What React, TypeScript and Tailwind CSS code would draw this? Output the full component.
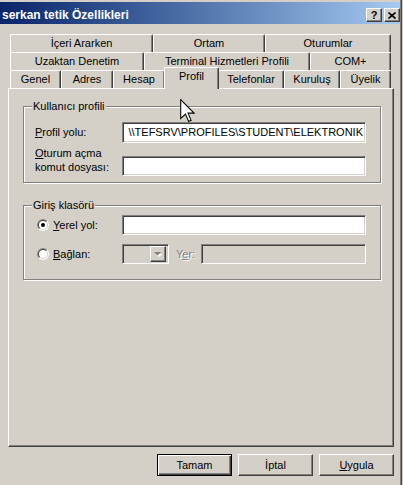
import clsx from 'clsx';

const row1 = [
  { label: 'İçeri Ararken', w: 'w-[143px]' },
  { label: 'Ortam', w: 'w-[112px]' },
  { label: 'Oturumlar', w: 'w-[126px]' },
];

const row2 = [
  { label: 'Uzaktan Denetim', w: 'w-[134px]' },
  { label: 'Terminal Hizmetleri Profili', w: 'w-[166px]' },
  { label: 'COM+', w: 'w-[81px]' },
];

const row3 = [
  { label: 'Genel', w: 'w-[51px]' },
  { label: 'Adres', w: 'w-[52px]' },
  { label: 'Hesap', w: 'w-[52px]' },
  { label: 'Profil', w: 'w-[55px]', active: true },
  { label: 'Telefonlar', w: 'w-[66px]' },
  { label: 'Kuruluş', w: 'w-[56px]' },
  { label: 'Üyelik', w: 'w-[51px]' },
];

const raised =
  'border-t border-l border-white border-r border-b border-r-[#404040] border-b-[#404040] shadow-[inset_-1px_-1px_0_#808080]';
const sunken =
  'border-t border-l border-[#808080] border-r border-b border-r-white border-b-white shadow-[inset_1px_1px_0_#404040,inset_-1px_-1px_0_#d4d0c8]';

type TabItem = { label: string; w: string; active?: boolean };

function TabRow({ tabs }: { tabs: TabItem[] }) {
  return (
    <div className="ml-[10px] flex h-[18px] items-start">
      {tabs.map((t) => (
        <div
          key={t.label}
          className={clsx(
            t.w,
            'flex justify-center rounded-t-[2px] border-l border-t border-r border-white border-r-[#404040] leading-none shadow-[inset_-1px_0_0_#808080]',
            t.active
              ? 'relative z-10 -mx-[1px] -mt-[3px] h-[22px] items-start bg-[#d4d0c8] pt-[3px]'
              : 'h-[18px] items-center',
          )}
        >
          {t.label}
        </div>
      ))}
    </div>
  );
}

function Radio({ checked }: { checked?: boolean }) {
  return (
    <svg width="12" height="12" viewBox="0 0 12 12" className="shrink-0">
      <circle cx="6" cy="6" r="6" fill="#ffffff" />
      <path d="M1.757 10.243 A6 6 0 0 1 10.243 1.757 Z" fill="#808080" />
      <circle cx="6" cy="6" r="5" fill="#d4d0c8" />
      <path d="M2.464 9.536 A5 5 0 0 1 9.536 2.464 Z" fill="#404040" />
      <circle cx="6" cy="6" r="4" fill="#ffffff" />
      {checked && <circle cx="6" cy="6" r="2" fill="#000000" />}
    </svg>
  );
}

function Button({ children, isDefault }: { children: React.ReactNode; isDefault?: boolean }) {
  return (
    <div
      className={clsx(
        'flex h-[22px] w-[75px] items-center justify-center',
        isDefault
          ? 'border border-black shadow-[inset_1px_1px_0_#fff,inset_-1px_-1px_0_#404040,inset_-2px_-2px_0_#808080]'
          : raised,
      )}
    >
      {children}
    </div>
  );
}

export default function App() {
  return (
    <div className="relative flex h-[485px] w-[403px] overflow-hidden bg-[#d4d0c8] font-['Liberation_Sans',Arial,sans-serif] text-[11px] text-black">
      <div className="h-full w-[402px] border-r border-r-[#404040] pt-[2px] shadow-[inset_-1px_0_0_#808080]">
        {/* title bar */}
        <div className="flex h-[22px] w-[400px] items-center bg-gradient-to-r from-[#0a246a] to-[#a6caf0] pb-[1px] pl-[2px] pt-[5px]">
          <span className="flex-1 text-[12px] font-bold leading-none text-white">serkan tetik Özellikleri</span>
          <div className="flex gap-[2px]">
            <div className={clsx(raised, 'flex h-[14px] w-[16px] items-center justify-center bg-[#d4d0c8] text-[11px] font-bold leading-none')}>
              ?
            </div>
            <div className={clsx(raised, 'flex h-[14px] w-[16px] items-center justify-center bg-[#d4d0c8]')}>
              <svg width="8" height="7" viewBox="0 0 8 7">
                <path d="M0.5 0.5 L7.5 6.5 M7.5 0.5 L0.5 6.5" stroke="#000" strokeWidth="1.6" />
              </svg>
            </div>
          </div>
        </div>

        {/* tabs */}
        <div className="pt-[10px]">
          <TabRow tabs={row1} />
          <TabRow tabs={row2} />
          <TabRow tabs={row3} />
        </div>

        {/* panel */}
        <div className={clsx(raised, 'ml-[8px] h-[359px] w-[386px] pl-[14px] pt-[17px]')}>
          {/* Kullanıcı profili */}
          <div className="relative h-[77px] w-[358px] border border-[#808080] shadow-[inset_1px_1px_0_#fff,1px_1px_0_#fff]">
            <span className="absolute -top-[8px] left-[8px] bg-[#d4d0c8] px-[1px] leading-[14px]">Kullanıcı profili</span>
            <div className="pl-[11px] pt-[15px]">
              <div className="flex h-[21px] items-center">
                <span className="w-[87px]">
                  <span className="underline">P</span>rofil yolu:
                </span>
                <div className={clsx(sunken, 'flex h-[21px] w-[244px] items-center justify-end overflow-hidden whitespace-nowrap bg-white pr-[2px]')}>
                  {'\\\\TEFSRV\\PROFILES\\STUDENT\\ELEKTRONIK'}
                </div>
              </div>
              <div className="mt-[3px] flex items-end">
                <span className="w-[87px] pb-[2px] leading-[14px]">
                  <span className="underline">O</span>turum açma
                  <br />
                  komut dosyası:
                </span>
                <div className={clsx(sunken, 'h-[20px] w-[244px] bg-white')} />
              </div>
            </div>
          </div>

          {/* Giriş klasörü */}
          <div className="relative mt-[22px] h-[75px] w-[358px] border border-[#808080] shadow-[inset_1px_1px_0_#fff,1px_1px_0_#fff]">
            <span className="absolute -top-[8px] left-[8px] bg-[#d4d0c8] px-[1px] leading-[14px]">Giriş klasörü</span>
            <div className="pl-[13px] pt-[9px]">
              <div className="flex h-[20px] items-center">
                <div className="flex w-[85px] items-center gap-[4px]">
                  <Radio checked />
                  <span>
                    <span className="underline">Y</span>erel yol:
                  </span>
                </div>
                <div className={clsx(sunken, 'h-[20px] w-[244px] bg-white')} />
              </div>
              <div className="mt-[9px] flex h-[20px] items-center">
                <div className="flex w-[85px] items-center gap-[4px]">
                  <Radio />
                  <span>
                    <span className="underline">B</span>ağlan:
                  </span>
                </div>
                <div className={clsx(sunken, 'flex h-[20px] w-[47px] items-center justify-end p-[2px]')}>
                  <div className={clsx(raised, 'flex h-[16px] w-[16px] items-center justify-center')}>
                    <svg width="8" height="5" viewBox="0 0 8 5">
                      <path d="M1 1 H7 L4 4 Z" fill="#fff" transform="translate(1 1)" />
                      <path d="M0 0 H7 L3.5 3.5 Z" fill="#808080" />
                    </svg>
                  </div>
                </div>
                <span className="ml-[7px] w-[25px] text-[#808080] [text-shadow:1px_1px_0_#fff]">
                  Y<span className="underline">e</span>r:
                </span>
                <div className={clsx(sunken, 'h-[20px] w-[165px]')} />
              </div>
            </div>
          </div>
        </div>

        {/* buttons */}
        <div className="mt-[7px] flex w-[394px] justify-end gap-[6px]">
          <Button isDefault>Tamam</Button>
          <Button>İptal</Button>
          <Button>
            <span>
              <span className="underline">U</span>ygula
            </span>
          </Button>
        </div>
      </div>

      {/* mouse cursor */}
      <svg className="absolute left-[180px] top-[99px]" width="15" height="23" viewBox="0 0 12.5 19.5">
        <path
          d="M0.5 0.5 V16.5 L4.5 12.8 L7.2 19 L9.3 18.1 L6.7 12 H11.8 Z"
          fill="#fff"
          stroke="#000"
          strokeWidth="0.9"
        />
      </svg>
    </div>
  );
}
